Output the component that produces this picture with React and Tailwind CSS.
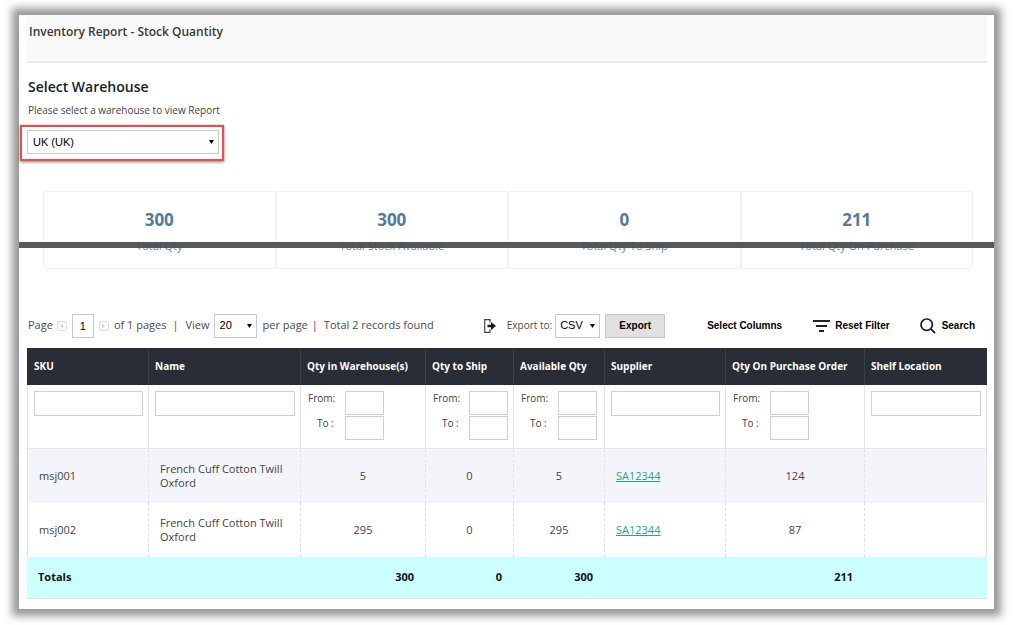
import { useId } from "react";

function Picker({ label, options, className, wrapClassName = "" }) {
  return (
    <span className={"relative inline-flex " + wrapClassName}>
      <select
        aria-label={label}
        className={
          "appearance-none rounded-none border border-[#c9cacd] bg-white font-['Liberation_Sans',sans-serif] text-[11px] text-black outline-none " +
          className
        }
      >
        {options.map((o) => (
          <option key={o}>{o}</option>
        ))}
      </select>
      <svg
        viewBox="0 0 6 5"
        className="pointer-events-none absolute top-1/2 right-[5px] h-[5px] w-[5px] -translate-y-1/2"
        aria-hidden="true"
      >
        <path d="M0 0h6L3 5z" fill="#000" />
      </svg>
    </span>
  );
}

function PageArrow({ label, d }) {
  return (
    <button
      type="button"
      aria-label={label}
      className="mt-[1px] flex size-[10px] items-center justify-center rounded-[2px] border border-[#dedede] bg-[#fafafa]"
    >
      <svg viewBox="0 0 4 6" className="h-[4px] w-[3px]" aria-hidden="true">
        <path d={d} fill="#c8c8c8" />
      </svg>
    </button>
  );
}

function Stat({ value, label }) {
  return (
    <div className="flex flex-1 flex-col items-center rounded-[2px] border border-[#f0f1f1] pt-[18px]">
      <div className="text-[17px] leading-[20px] font-bold text-[#54799b]">{value}</div>
      <div className="mt-[8px] text-[11px] leading-[16px] text-[#74879a]">{label}</div>
    </div>
  );
}

const boxClass = "block border border-[#cfd0d5] bg-white px-1 text-[11px] outline-none";

function RangeFilter({ name }) {
  const id = useId();
  return (
    <div className="flex flex-col gap-[1px] pl-[1px] text-[10px] leading-[14px] text-[#444]">
      <div className="flex h-[24px]">
        <label htmlFor={id + "f"} className="w-[37px]">
          From:
        </label>
        <input id={id + "f"} name={name + "-from"} className={boxClass + " h-[24px] w-[39px]"} />
      </div>
      <div className="flex h-[24px]">
        <label htmlFor={id + "t"} className="w-[37px] pl-[9px]">
          To :
        </label>
        <input id={id + "t"} name={name + "-to"} className={boxClass + " h-[24px] w-[39px]"} />
      </div>
    </div>
  );
}

const columns = [
  { name: "SKU", w: "w-[122px]" },
  { name: "Name", w: "w-[152px]" },
  { name: "Qty in Warehouse(s)", w: "w-[125px]", range: true },
  { name: "Qty to Ship", w: "w-[88px]", range: true },
  { name: "Available Qty", w: "w-[91px]", range: true },
  { name: "Supplier", w: "w-[121px]" },
  { name: "Qty On Purchase Order", w: "w-[139px]", range: true },
  { name: "Shelf Location", w: "w-[122px]" },
];

const rows = [
  ["msj001", "French Cuff Cotton Twill Oxford", "5", "0", "5", "SA12344", "124", ""],
  ["msj002", "French Cuff Cotton Twill Oxford", "295", "0", "295", "SA12344", "87", ""],
];

const totals = ["Totals", "", "300", "0", "300", "", "211", ""];

function StockTable() {
  return (
    <table className="w-full table-fixed border-separate border-spacing-0 text-left text-[#444]">
      <colgroup>
        {columns.map((c) => (
          <col key={c.name} className={c.w} />
        ))}
      </colgroup>
      <thead>
        <tr className="h-[37px] bg-[#292d36]">
          {columns.map((c) => (
            <th
              key={c.name}
              className="border-r border-[#3b3f48] pl-[6px] text-[10px] font-bold whitespace-nowrap text-white first:pl-[7px] last:border-r-0"
            >
              {c.name}
            </th>
          ))}
        </tr>
      </thead>
      <tbody>
        <tr className="h-[64px]">
          {columns.map((c) => (
            <td
              key={c.name}
              className="border-r border-b border-[#e6e6e8] px-[6px] pt-[6px] pr-[5px] align-top first:border-l"
            >
              {c.range ? (
                <RangeFilter name={c.name} />
              ) : (
                <input aria-label={c.name} className={boxClass + " h-[25px] w-full"} />
              )}
            </td>
          ))}
        </tr>
        {rows.map((r) => (
          <tr key={r[0]} className="h-[54px] odd:bg-white even:bg-[#f4f5fb]">
            {r.map((v, i) => (
              <td
                key={i}
                className={
                  "border-r border-dashed border-[#e0e1e6] px-[11px] text-[11px] leading-[14px] first:border-l first:[border-left-style:solid] last:[border-right-style:solid] " +
                  (columns[i].range ? "text-center" : "text-left")
                }
              >
                {i === 5 ? (
                  <a href="#supplier" className="text-[#2fa084] underline">
                    {v}
                  </a>
                ) : (
                  v
                )}
              </td>
            ))}
          </tr>
        ))}
      </tbody>
      <tfoot>
        <tr className="h-[42px] bg-[#ccffff]">
          {totals.map((v, i) => (
            <td
              key={i}
              className={
                "border-b border-[#d5e5e8] text-[11px] font-bold text-[#111] " +
                (i === 0 ? "pl-[11px]" : "pr-[12px] text-right")
              }
            >
              {v}
            </td>
          ))}
        </tr>
      </tfoot>
    </table>
  );
}

export default function App() {
  return (
    <div className="min-h-screen bg-white pt-[15px] pr-[20px] pb-[16px] pl-[19px] font-['Open_Sans',sans-serif]">
      <main className="relative bg-white pr-[7px] pb-[10px] pl-[8px] shadow-[0_0_8px_7px_#999]">
        <header className="h-[48px] border-b-2 border-[#e9eaee] bg-[#f8f8f8] px-[2px] pt-[8px]">
          <h1 className="text-[12px] leading-[18px] font-semibold text-[#3b3b33]">
            Inventory Report - Stock Quantity
          </h1>
        </header>

        <section className="pt-[15px] pl-[1px]">
          <h2 className="text-[14px] leading-[18px] font-semibold text-[#14232a]">
            Select Warehouse
          </h2>
          <p className="mt-[6px] text-[10px] leading-[16px] text-[#444]">
            Please select a warehouse to view Report
          </p>
          <div className="mt-[7px] -ml-[8px] flex w-fit border-2 border-[#ee4c4f] bg-white pt-[3px] pr-[3px] pb-[5px] pl-[5px] shadow-[0_1px_3px_rgba(0,0,0,0.5)]">
            <Picker
              label="Warehouse"
              options={["UK (UK)"]}
              className="h-[24px] w-[192px] pl-[5px]"
            />
          </div>
        </section>

        <section className="mt-[30px] mr-[14px] ml-[16px] flex h-[78px]">
          <Stat value="300" label="Total Qty" />
          <Stat value="300" label="Total Stock Available" />
          <Stat value="0" label="Total Qty To Ship" />
          <Stat value="211" label="Total Qty On Purchase" />
        </section>
        <div className="absolute inset-x-0 top-[226px] h-[7px] border-t border-white bg-[#44484a]/90 bg-clip-padding" />

        <section className="mt-[44px] flex h-[25px] items-center text-[11px] whitespace-nowrap text-[#4c4c4c]">
          <div className="flex items-center pl-[1px]">
            <span>Page</span>
            <span className="ml-[4px] flex items-center gap-[5px]">
              <PageArrow label="Previous page" d="M4 0v6L0 3z" />
              <input
                aria-label="Page number"
                defaultValue="1"
                className="h-[24px] w-[22px] border border-[#c9cacd] bg-white text-center font-['Liberation_Sans',sans-serif] text-[11px] text-black outline-none"
              />
              <PageArrow label="Next page" d="M0 0v6l4-3z" />
              <span>of 1 pages</span>
            </span>
            <span className="ml-[6px]">|</span>
            <span className="ml-[7px]">View</span>
            <Picker
              label="Records per page"
              options={["20"]}
              wrapClassName="mr-[6px] ml-[4px]"
              className="h-[24px] w-[43px] pl-[5px]"
            />
            <span>per page</span>
            <span className="ml-[4px]">|</span>
            <span className="ml-[6px]">Total 2 records found</span>
          </div>
          <div className="ml-[50px] flex items-center">
            <svg viewBox="0 0 12 14" className="h-[14px] w-[12px]" aria-hidden="true">
              <path d="M6 3.500V.7H.7v12.600H6V10.500" fill="none" stroke="#4a453c" strokeWidth="1.200" />
              <path d="M3.500 5.700H7V3l5 4-5 4V8.300H3.500z" fill="#1d1a16" />
            </svg>
            <span className="ml-[11px] text-[10px]">Export to:</span>
            <Picker
              label="Export format"
              options={["CSV"]}
              wrapClassName="ml-[3px]"
              className="h-[24px] w-[45px] pl-[4px]"
            />
            <button
              type="button"
              className="ml-[5px] h-[24px] w-[60px] border border-[#c6c7ca] bg-[#e0e0e0] font-['Liberation_Sans',sans-serif] text-[10px] font-bold text-black"
            >
              Export
            </button>
          </div>
          <div className="ml-auto flex items-center pr-[12px] font-['Liberation_Sans',sans-serif] text-[10px] font-bold text-black">
            <button type="button">Select Columns</button>
            <button type="button" className="ml-[31px] flex items-center">
              <svg viewBox="0 0 17 12" className="h-[12px] w-[17px]" aria-hidden="true">
                <path d="M0 0h17v2H0zM3 5h11v2H3zM6 10h5v2H6z" fill="#222" />
              </svg>
              <span className="ml-[5px]">Reset Filter</span>
            </button>
            <button type="button" className="ml-[30px] flex items-center">
              <svg viewBox="0 0 16 16" className="size-[16px]" aria-hidden="true">
                <circle cx="6.700" cy="6.700" r="5.700" fill="none" stroke="#1c1c1c" strokeWidth="1.700" />
                <path d="M10.800 10.800L15 15" stroke="#1c1c1c" strokeWidth="1.900" />
              </svg>
              <span className="ml-[6px]">Search</span>
            </button>
          </div>
        </section>

        <section className="mt-[10px]">
          <StockTable />
        </section>
      </main>
    </div>
  );
}
